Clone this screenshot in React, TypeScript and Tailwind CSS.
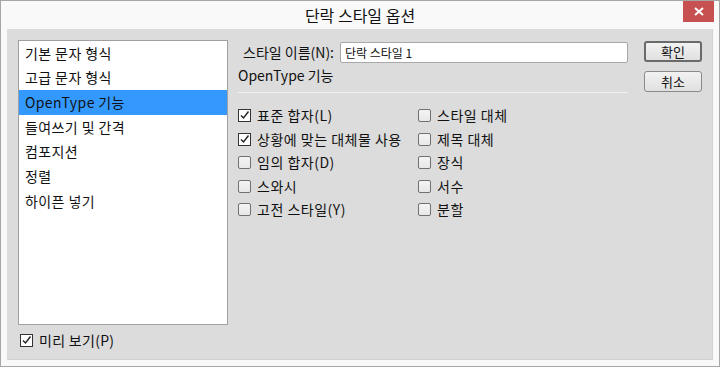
import React from "react";

const F = { fontFamily: "'Noto Sans CJK KR', 'Noto Sans', sans-serif" };

function Box({ checked }: { checked?: boolean }) {
  return (
    <div className={"w-[13px] h-[13px] shrink-0 flex items-center justify-center " + (checked ? "border border-[#333] bg-white" : "border border-[#707070] rounded-[2px] bg-gradient-to-b from-[#f4f4f4] to-[#e8e8e8]")}>
      {checked && (
        <svg width="11" height="11" viewBox="0 0 11 11">
          <path d="M2 5.5 L4.5 8 L9.5 1.5" fill="none" stroke="#222" strokeWidth="1.4" />
        </svg>
      )}
    </div>
  );
}

function Check({ label, checked, h }: { label: string; checked?: boolean; h: string }) {
  return (
    <div className={h + " flex items-center gap-[6px] text-[14px] text-[#111] tracking-[0.5px]"}>
      <Box checked={checked} />
      <span>{label}</span>
    </div>
  );
}

const H = ["h-[23px]", "h-[24px]", "h-[23px]", "h-[24px]", "h-[23px]"];

export default function App() {
  const items = ["기본 문자 형식", "고급 문자 형식", "OpenType 기능", "들여쓰기 및 간격", "컴포지션", "정렬", "하이픈 넣기"];
  const left = [["표준 합자(L)", true], ["상황에 맞는 대체물 사용", true], ["임의 합자(D)", false], ["스와시", false], ["고전 스타일(Y)", false]] as const;
  const right = ["스타일 대체", "제목 대체", "장식", "서수", "분할"];
  return (
    <div style={F} className="w-[720px] h-[367px] border border-[#a6a6a6] bg-[#f9f9f9] flex flex-col">
      <div className="h-[28px] flex items-start">
        <div className="w-[36px]" />
        <div className="flex-1 h-[28px] flex items-center justify-center text-[16px] text-[#111]">단락 스타일 옵션</div>
        <div className="w-[31px] h-[21px] bg-[#c75050] flex items-center justify-center mr-[5px]">
          <svg width="10" height="9" viewBox="0 0 10 9">
            <path d="M1 1 L9 8 M9 1 L1 8" stroke="white" strokeWidth="2" />
          </svg>
        </div>
      </div>
      <div className="ml-[6px] w-[706px] h-[331px] bg-[#dcdcdc] border-r border-b border-[#d0d0d0] flex pl-[11px] pt-[11px]">
        <div className="w-[210px] flex flex-col">
          <div className="h-[285px] bg-white border border-[#a0a0a0] flex flex-col text-[14px] text-[#111] tracking-[0.4px]">
            {items.map((it, i) => (
              <div key={it} className={"h-[24.67px] flex items-center pl-[6px] " + (i === 2 ? "bg-[#3399ff]" : "")}>{it}</div>
            ))}
          </div>
          <div className="mt-[6px] h-[18px] flex items-center gap-[6px] pl-[2px] text-[14px] text-[#111] tracking-[0.3px]">
            <Box checked />
            <span>미리 보기(P)</span>
          </div>
        </div>
        <div className="ml-[10px] w-[390px] flex flex-col">
          <div className="flex items-center h-[25px]">
            <div className="w-[102px] pl-[5px] text-[14px] text-[#111]">스타일 이름(N):</div>
            <div className="w-[288px] h-[21px] bg-white border border-[#a8a8a8] rounded-[2px] flex items-center pl-[4px] text-[12px] text-[#111]">단락 스타일 1</div>
          </div>
          <div className="h-[24px] flex items-center text-[14px] text-[#111] mt-[-2px]">OpenType 기능</div>
          <div className="mt-[5px] h-[1px] bg-[#a0a0a0] border-b border-[#f2f2f2]" />
          <div className="mt-[11px] flex">
            <div className="w-[180px] flex flex-col">
              {left.map(([l, c], i) => (
                <Check key={l} label={l} checked={c} h={H[i]} />
              ))}
            </div>
            <div className="flex flex-col">
              {right.map((l, i) => (
                <Check key={l} label={l} h={H[i]} />
              ))}
            </div>
          </div>
        </div>
        <div className="ml-[16px] pt-[1px] flex flex-col gap-[9px]">
          <div className="w-[58px] h-[21px] border-2 border-[#6a6a6a] rounded-[3px] bg-gradient-to-b from-[#f2f2f2] to-[#e0e0e0] flex items-center justify-center text-[13px] text-[#111]">확인</div>
          <div className="w-[58px] h-[21px] border border-[#8a8a8a] rounded-[3px] bg-gradient-to-b from-[#f2f2f2] to-[#e0e0e0] flex items-center justify-center text-[13px] text-[#111]">취소</div>
        </div>
      </div>
    </div>
  );
}
